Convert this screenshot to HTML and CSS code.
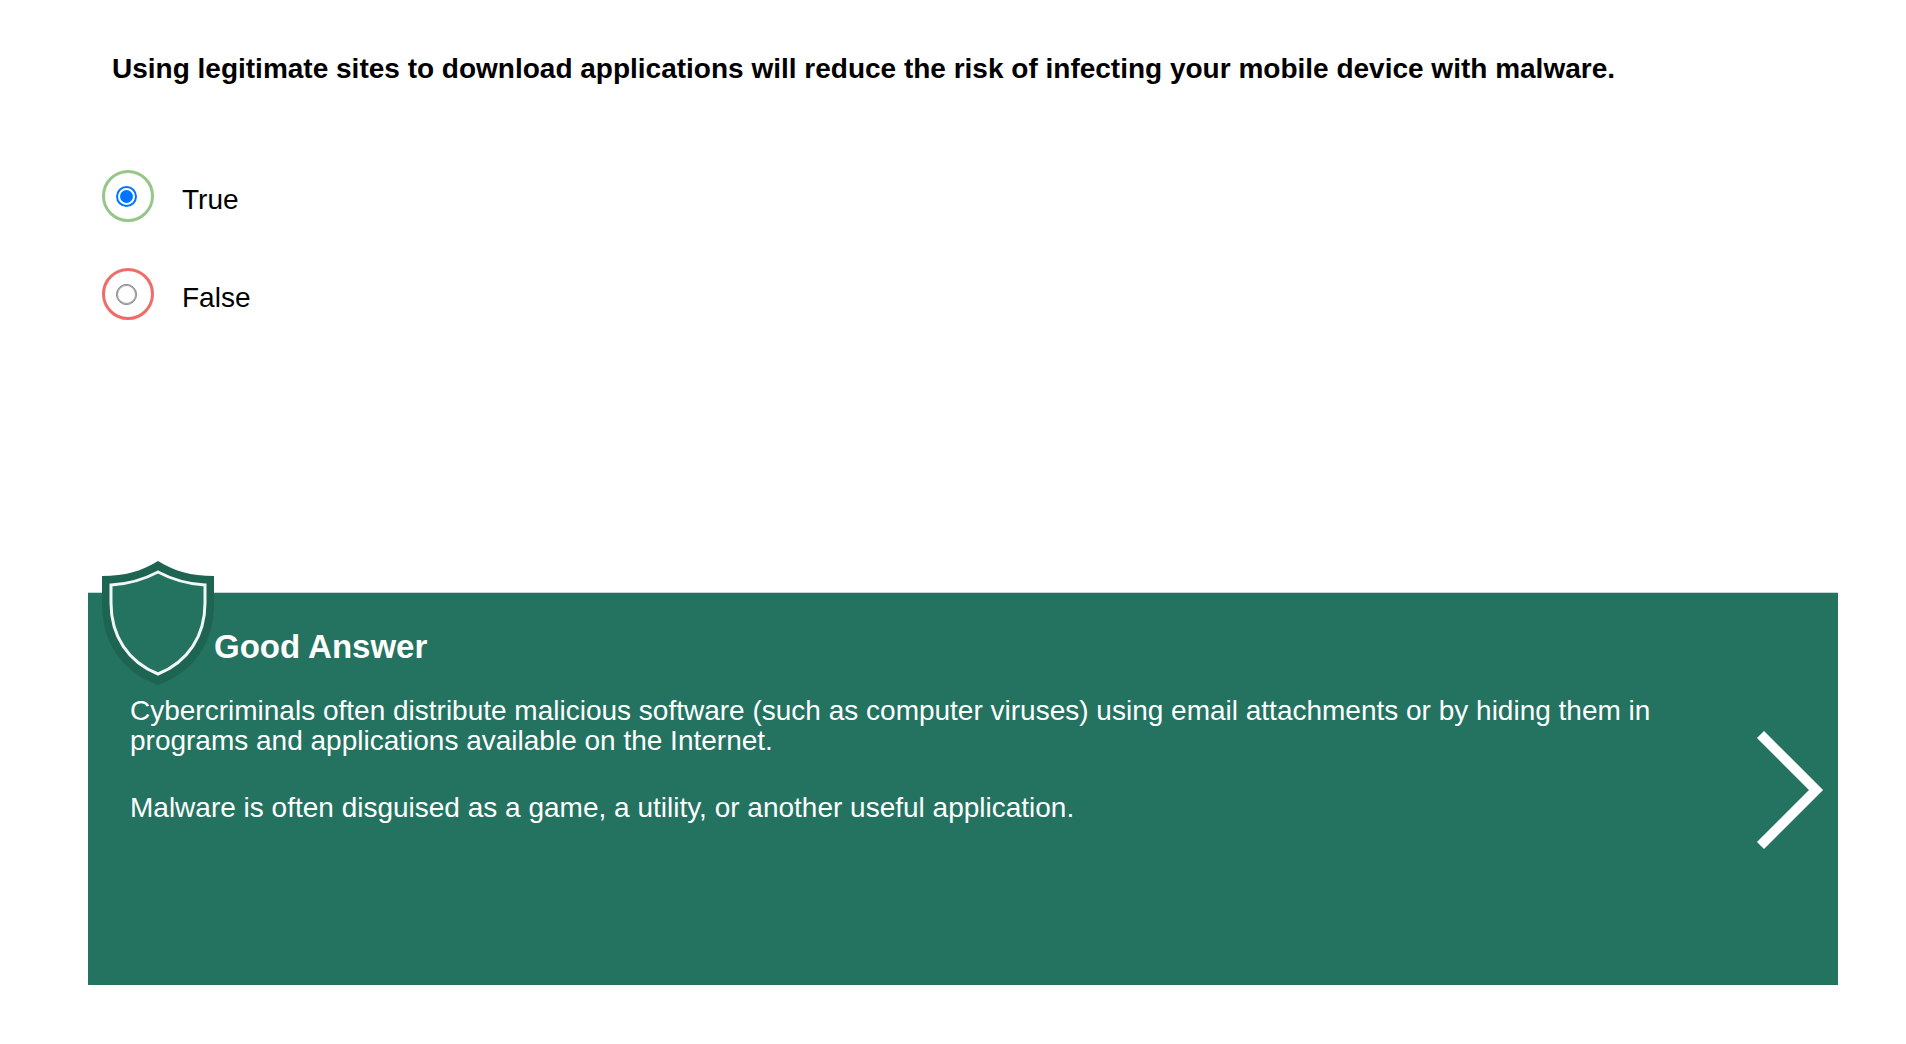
FILE: index.html
```html
<!DOCTYPE html>
<html lang="en">
<head>
<meta charset="utf-8">
<meta name="viewport" content="width=device-width, initial-scale=1">
<title>Mobile device security quiz</title>
<link rel="stylesheet" href="styles.css">
</head>
<body>
<main class="quiz">
  <fieldset class="question">
    <legend class="question-text">Using legitimate sites to download applications will reduce the risk of infecting your mobile device with malware.</legend>
    <div class="options">
      <label class="option">
        <span class="ring ring-correct"><input class="radio" type="radio" name="answer" value="true" checked></span>
        <span class="option-text">True</span>
      </label>
      <label class="option">
        <span class="ring ring-wrong"><input class="radio" type="radio" name="answer" value="false"></span>
        <span class="option-text">False</span>
      </label>
    </div>
  </fieldset>
  <section class="feedback">
    <div class="feedback-body">
      <header class="feedback-header">
        <svg class="shield" viewBox="0 0 112 124" aria-hidden="true">
          <path fill="#1e6452" d="M56 0C72 10 89 15 112 15V42C112 80 94 110 56 124C18 110 0 80 0 42V15C23 15 40 10 56 0Z"/>
          <path fill="#237360" stroke="#f1f7f5" stroke-width="3" d="M56 11C71 19 85 23 103 24V42C103 75 86 101 56 113C26 101 9 75 9 42V24C27 23 41 19 56 11Z"/>
        </svg>
        <h2 class="feedback-title">Good Answer</h2>
      </header>
      <div class="feedback-text">
        <p>Cybercriminals often distribute malicious software (such as computer viruses) using email attachments or by hiding them in programs and applications available on the Internet.</p>
        <p>Malware is often disguised as a game, a utility, or another useful application.</p>
      </div>
    </div>
    <button class="next" type="button" aria-label="Next question">
      <svg class="chevron" viewBox="0 0 66 118" aria-hidden="true"><path fill="none" stroke="#fff" stroke-width="10" d="M3.500 3.500L59 59L3.500 114.500"/></svg>
    </button>
  </section>
</main>
</body>
</html>
```
FILE: styles.css
```css
* { box-sizing: border-box; }

body {
  margin: 0;
  background: #fff;
  color: #000;
  font-family: "Liberation Sans", Arial, sans-serif;
  font-size: 28px;
  line-height: 30px;
}

.quiz {
  padding: 54px 68px 56px 88px;
}

.question {
  margin: 0;
  padding: 0;
  border: 0;
}

.question-text {
  padding: 0 24px;
  font-weight: bold;
}

.options {
  display: flex;
  flex-direction: column;
  gap: 46px;
  padding: 86px 14px 0;
}

.option {
  display: flex;
  align-items: center;
  align-self: flex-start;
  gap: 28px;
}

.ring {
  display: flex;
  align-items: center;
  justify-content: center;
  width: 52px;
  height: 52px;
  padding-right: 3px;
  border: 3px solid;
  border-radius: 50%;
}

.ring-correct { border-color: #97c788; }
.ring-wrong { border-color: #ef6c69; }

.radio {
  display: grid;
  place-content: center;
  width: 21px;
  height: 21px;
  margin: 0;
  border: 1px solid #767676;
  border-radius: 50%;
  background: #fff;
  box-shadow: inset 0 0 0 1px #a0a0a0;
  appearance: none;
}

.radio:checked {
  border: 2px solid #0075ff;
  box-shadow: none;
}

.radio:checked::before {
  content: "";
  width: 13px;
  height: 13px;
  border-radius: 50%;
  background: #0075ff;
}

.option-text { padding-top: 8px; }

.feedback {
  display: flex;
  justify-content: space-between;
  min-height: 393px;
  margin-top: 272px;
  padding: 0 15px 0 14px;
  border-top: 1px solid #c2d8d3;
  background: #237360;
  color: #fff;
}

.feedback-body { flex: 1; }

.feedback-header {
  display: flex;
  align-items: flex-end;
  height: 92px;
}

.shield {
  flex: none;
  width: 112px;
  height: 124px;
}

.feedback-title {
  margin: 0;
  padding-bottom: 18px;
  font-size: 33px;
  line-height: 40px;
}

.feedback-text {
  display: flex;
  flex-direction: column;
  gap: 37px;
  padding: 11px 72px 0 28px;
}

.feedback-text p { margin: 0; }

.next {
  align-self: center;
  padding: 2px 0 0;
  border: 0;
  background: none;
  cursor: pointer;
}

.chevron {
  display: block;
  width: 66px;
  height: 118px;
  overflow: visible;
}
```
